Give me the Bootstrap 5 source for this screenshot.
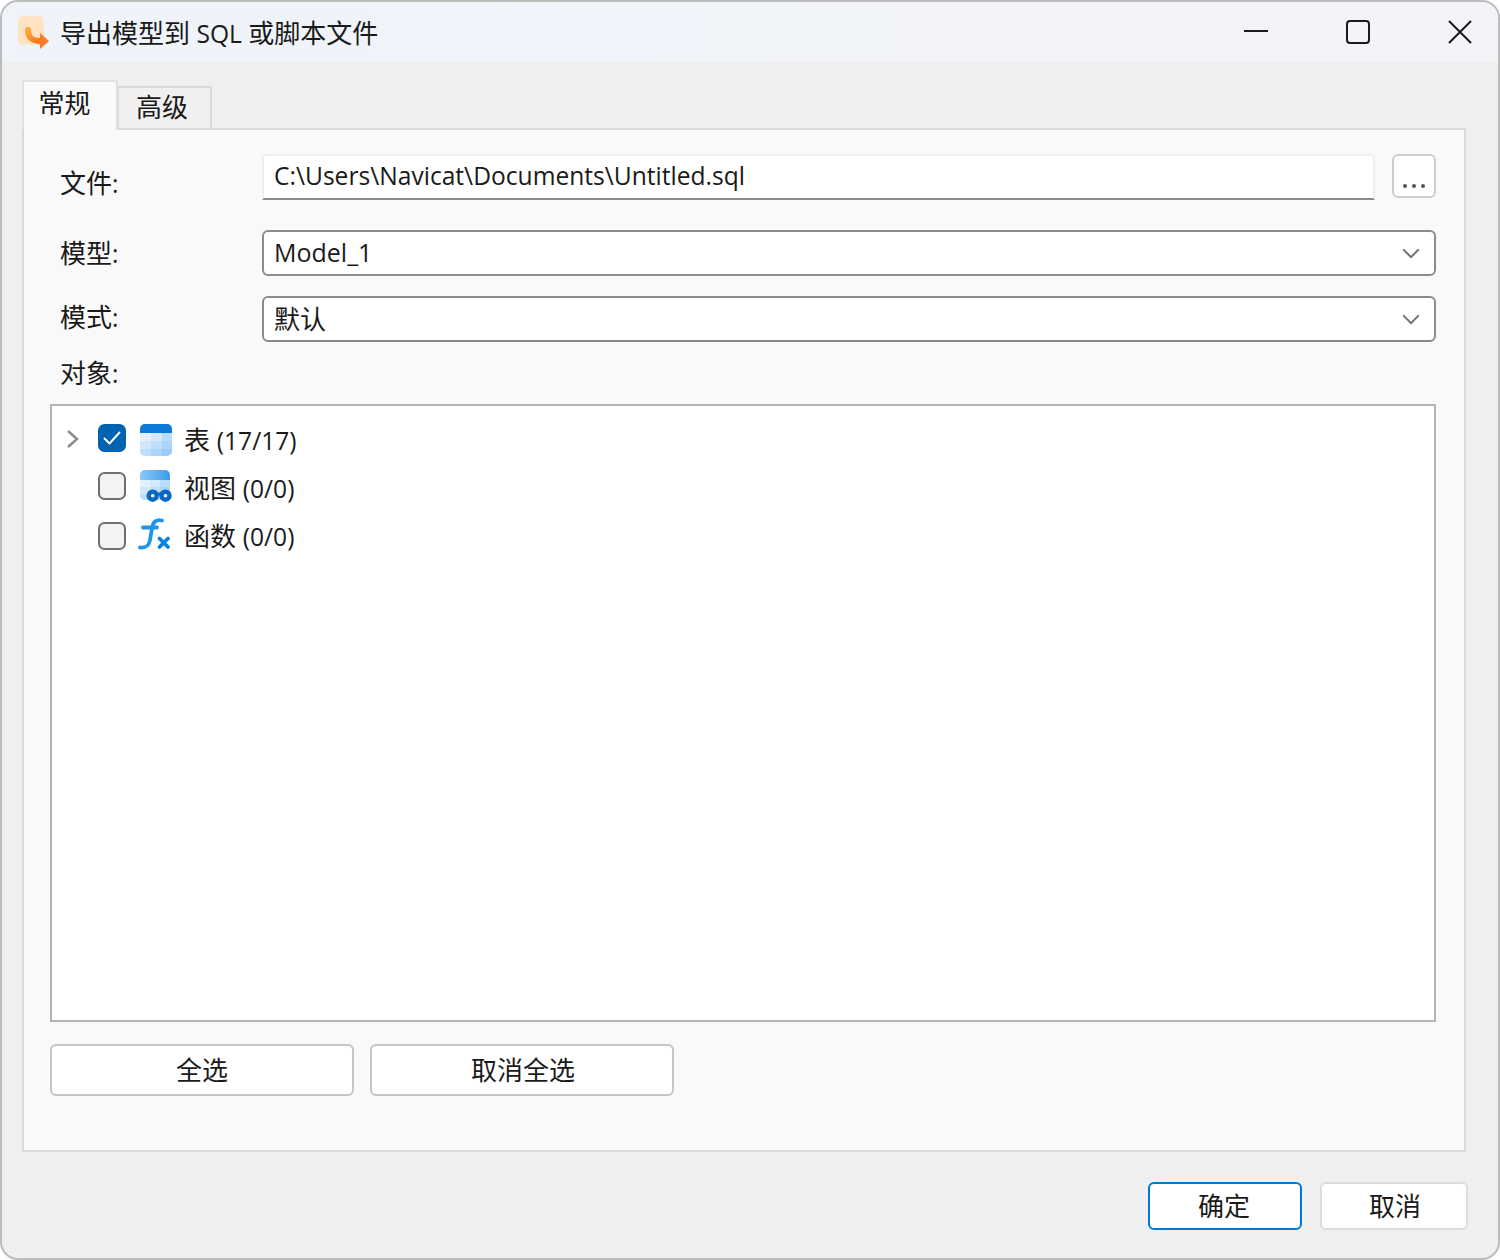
<!DOCTYPE html>
<html lang="zh-CN">
<head>
<meta charset="utf-8">
<title>导出模型到 SQL 或脚本文件</title>
<link href="https://cdn.jsdelivr.net/npm/bootstrap@5.3.0/dist/css/bootstrap.min.css" rel="stylesheet">
<style>
html,body{height:100%;margin:0;background:#fff}
body{font-family:"Open Sans","Noto Sans CJK SC",sans-serif;font-size:26px;color:#1a1a1a;line-height:32px}
.lat{font-size:24.6px}
.win{width:1500px;height:1260px;border:2px solid #bcbcbc;border-radius:18px;background:#efefef;overflow:hidden}
.tbar{height:60px;background:linear-gradient(90deg,#eff4fa,#f3f3f8);padding-left:16px}
.tlogo{width:34px;height:34px;margin-top:2px;margin-right:8px}
.ttl{padding-top:2px}
.wbtn{background:none;border:0;padding:0;width:24px;height:24px;line-height:0}
.wbtn-gap1{margin-right:78px}
.wbtn-gap2{margin-right:78px}
.wbtn-last{margin-right:26px}
.tabstrip{padding:18px 0 0 20px;margin-bottom:-2px;position:relative;z-index:1;border:0;--bs-nav-tabs-border-width:0;align-items:flex-end}
.tabstrip .nav-link{font-size:26px;line-height:32px;color:#1a1a1a;border:2px solid #d9d9d9;border-radius:0;background:#f0f0f0;padding:0 5px 2px 0;height:44px;width:95px;display:flex;align-items:center;justify-content:center;margin:0 0 0 -1px}
.tabstrip .nav-link.active{height:50px;width:96px;background:#f9f9f9;border-bottom:0;color:#1a1a1a;padding:0 11px 6px 0;margin:0;position:relative;z-index:1}
.tabstrip .nav-item{display:flex;align-items:flex-end}
.pane{margin:0 32px 0 20px;height:1024px;background:#f9f9f9;border:2px solid #d9d9d9;padding:24px 28px 0 26px}
.lbl{width:212px;padding-left:10px;flex:none;margin:0}
.lbl-down{padding-top:12px}
.lbl-up{padding-bottom:4px}
.frow1{height:46px}
.inpt{height:46px;width:1113px;flex:none;margin-right:1px;border:2px solid #eee;border-bottom-color:#8a8a8a;border-radius:4px 4px 0 0;background:#fff;font-size:24.6px;line-height:32px;padding:0 10px 4px 10px;color:#1a1a1a;box-shadow:none}
.brow{width:44px;height:44px;margin-left:16px;padding:0;background:#fff;border:2px solid #cdcdcd;border-radius:6px;color:#555;display:flex;justify-content:center;align-items:flex-end}
.brow svg{margin-bottom:7px}
.frow2{height:46px;margin-top:30px}
.frow3{height:46px;margin-top:20px}
.sel{height:46px;width:1174px;flex:none;border:2px solid #8b8b8b;border-radius:6px;font-size:26px;line-height:32px;padding:0 40px 0 10px;color:#1a1a1a;box-shadow:none;--bs-form-select-bg-img:url("data:image/svg+xml,%3csvg xmlns='http://www.w3.org/2000/svg' viewBox='0 0 20 12'%3e%3cpath fill='none' stroke='%23707070' stroke-width='2.2' stroke-linecap='round' d='M2 2l8 8 8-8'/%3e%3c/svg%3e");background-position:right 14px center;background-size:18px 11px}
.sel-lat{font-size:25px;padding-bottom:2px}
.lblobj{padding-left:10px;margin-top:15px;height:32px}
.treebox{margin-top:15px;height:618px;background:#fff;border:2px solid #b4b4b4;padding-top:10px}
.trow{height:48px;padding-left:14px}
.twist{width:18px;flex:none;line-height:0;margin-bottom:2px}
.cbx{width:28px;height:28px;margin:0 14px;flex:none;border:2px solid #6f6f6f;border-radius:6px;--bs-form-check-bg:#f3f3f3;float:none}
.cbx-up{margin-bottom:4px}
.cbx:checked[type=checkbox]{background-color:#0063b1;border-color:#0063b1;background-size:20px 20px;--bs-form-check-bg-image:url("data:image/svg+xml,%3csvg xmlns='http://www.w3.org/2000/svg' viewBox='0 0 20 20'%3e%3cpath fill='none' stroke='%23fff' stroke-width='2' stroke-linecap='round' stroke-linejoin='round' d='M2.5 10.5l5 5 10-11'/%3e%3c/svg%3e")}
.ticon{width:32px;height:32px;flex:none;margin-right:12px;line-height:0}
.ticon svg{overflow:visible}
.ticon-up{margin-bottom:4px}
.ttxt{font-size:26px;line-height:32px}
.actrow{margin-top:22px;gap:16px}
.actbtn{width:304px;height:52px;background:#fff;border:2px solid #c5c5c5;border-radius:6px;font-size:26px;line-height:32px;color:#1a1a1a;padding:0}
.actbtn-nudge{padding-left:2px}
.foot{margin-top:30px;padding-right:30px;gap:18px}
.fbtn{height:48px;background:#fff;border:2px solid #dcdcdc;border-radius:6px;font-size:26px;line-height:32px;color:#1a1a1a;padding:0 0 0 2px;width:148px}
.fbtn-main{width:154px;border-color:#0078d4;padding:0 2px 0 0}
</style>
</head>
<body>
<div class="win d-flex flex-column">
  <div class="tbar d-flex align-items-center">
    <svg class="tlogo" viewBox="0 0 34 34">
      <defs><linearGradient id="arr" x1="0" y1="0" x2="1" y2="1"><stop offset="0" stop-color="#ffa733"/><stop offset="1" stop-color="#ff6f1f"/></linearGradient></defs>
      <rect x="0" y="0" width="26" height="29" rx="5" fill="#ffe3c2"/>
      <path d="M10 14 C10 22 14 25 24 25" fill="none" stroke="url(#arr)" stroke-width="6" stroke-linecap="round"/>
      <path d="M22 17 L31 25 L22 33 Z" fill="#ff7a22"/>
    </svg>
    <span class="flex-grow-1 ttl">导出模型到<span class="lat"> SQL </span>或脚本文件</span>
    <button class="wbtn wbtn-gap1" aria-label="最小化"><svg width="24" height="24" viewBox="0 0 24 24"><path d="M0 11h24" stroke="#1a1a1a" stroke-width="2"/></svg></button>
    <button class="wbtn wbtn-gap2" aria-label="最大化"><svg width="24" height="24" viewBox="0 0 24 24"><rect x="1" y="1" width="22" height="22" rx="3" fill="none" stroke="#1a1a1a" stroke-width="2"/></svg></button>
    <button class="wbtn wbtn-last" aria-label="关闭"><svg width="24" height="24" viewBox="0 0 24 24"><path d="M1 1l22 22M23 1L1 23" stroke="#1a1a1a" stroke-width="2"/></svg></button>
  </div>
  <ul class="nav nav-tabs tabstrip">
    <li class="nav-item"><a class="nav-link active" href="#">常规</a></li>
    <li class="nav-item"><a class="nav-link" href="#">高级</a></li>
  </ul>
  <div class="pane">
    <div class="d-flex align-items-center frow1">
      <label class="lbl lbl-down">文件<span class="lat">:</span></label>
      <input class="form-control inpt" value="C:\Users\Navicat\Documents\Untitled.sql">
      <button class="btn brow align-self-start" aria-label="浏览"><svg width="24" height="6" viewBox="0 0 24 6"><circle cx="3" cy="3" r="2" fill="#555"/><circle cx="12" cy="3" r="2" fill="#555"/><circle cx="21" cy="3" r="2" fill="#555"/></svg></button>
    </div>
    <div class="d-flex align-items-center frow2">
      <label class="lbl">模型<span class="lat">:</span></label>
      <select class="form-select sel sel-lat"><option>Model_1</option></select>
    </div>
    <div class="d-flex align-items-center frow3">
      <label class="lbl lbl-up">模式<span class="lat">:</span></label>
      <select class="form-select sel"><option>默认</option></select>
    </div>
    <div class="lblobj">对象<span class="lat">:</span></div>
    <div class="treebox">
      <div class="d-flex align-items-center trow">
        <span class="twist"><svg width="14" height="20" viewBox="0 0 14 20"><path d="M2 2l9 8-9 8" fill="none" stroke="#8a8a8a" stroke-width="2.4"/></svg></span>
        <input class="form-check-input cbx cbx-up" type="checkbox" checked aria-label="表">
        <span class="ticon"><svg width="32" height="32" viewBox="0 0 32 32">
          <defs><clipPath id="c1"><rect width="32" height="32" rx="5"/></clipPath></defs>
          <g clip-path="url(#c1)">
            <rect width="32" height="9" fill="#0a7bd6"/>
            <rect y="9" width="11" height="8" fill="#e3f1fe"/><rect x="11" y="9" width="11" height="8" fill="#d3e9fd"/><rect x="22" y="9" width="10" height="8" fill="#b9dcfb"/>
            <rect y="17" width="11" height="8" fill="#cfe6fd"/><rect x="11" y="17" width="11" height="8" fill="#bddffb"/><rect x="22" y="17" width="10" height="8" fill="#a9d5fa"/>
            <rect y="25" width="11" height="7" fill="#bddffb"/><rect x="11" y="25" width="11" height="7" fill="#a9d5fa"/><rect x="22" y="25" width="10" height="7" fill="#98ccf9"/>
          </g></svg></span>
        <span class="ttxt">表 <span class="lat">(17/17)</span></span>
      </div>
      <div class="d-flex align-items-center trow">
        <span class="twist"></span>
        <input class="form-check-input cbx cbx-up" type="checkbox" aria-label="视图">
        <span class="ticon ticon-up"><svg width="32" height="36" viewBox="0 0 32 36">
          <defs><clipPath id="c2"><rect width="30" height="30" rx="5"/></clipPath><linearGradient id="g2" x1="0" x2="1"><stop offset="0" stop-color="#8cc8fa"/><stop offset="1" stop-color="#3d9bea"/></linearGradient></defs>
          <g clip-path="url(#c2)">
            <rect width="30" height="10" fill="url(#g2)"/>
            <rect y="10" width="10" height="7" fill="#e3f1fe"/><rect x="10" y="10" width="10" height="7" fill="#d3e9fd"/><rect x="20" y="10" width="10" height="7" fill="#b9dcfb"/>
            <rect y="17" width="10" height="7" fill="#cfe6fd"/><rect x="10" y="17" width="10" height="7" fill="#bddffb"/><rect x="20" y="17" width="10" height="7" fill="#a9d5fa"/>
            <rect y="24" width="30" height="6" fill="#bddffb"/>
          </g>
          <circle cx="12.700" cy="25.700" r="4" fill="#fff" stroke="#0a68c4" stroke-width="4.400"/>
          <circle cx="25.500" cy="25.700" r="4" fill="#fff" stroke="#0a68c4" stroke-width="4.400"/>
          <path d="M16 24h6" stroke="#0a68c4" stroke-width="3"/>
        </svg></span>
        <span class="ttxt">视图 <span class="lat">(0/0)</span></span>
      </div>
      <div class="d-flex align-items-center trow">
        <span class="twist"></span>
        <input class="form-check-input cbx" type="checkbox" aria-label="函数">
        <span class="ticon"><svg width="32" height="32" viewBox="0 0 32 32">
          <path d="M22 0.500C16 -1 13 2 12 8L10 20C9 26 6 28 0 27.500M3 7.500H17" fill="none" stroke="#1e96ef" stroke-width="3.800" stroke-linecap="round"/>
          <path d="M19.500 18.500L28 27M28 18.500L19.500 27" stroke="#0a80e0" stroke-width="3.800" stroke-linecap="round"/>
        </svg></span>
        <span class="ttxt">函数 <span class="lat">(0/0)</span></span>
      </div>
    </div>
    <div class="d-flex actrow">
      <button class="btn actbtn">全选</button>
      <button class="btn actbtn actbtn-nudge">取消全选</button>
    </div>
  </div>
  <div class="d-flex justify-content-end foot">
    <button class="btn fbtn fbtn-main">确定</button>
    <button class="btn fbtn">取消</button>
  </div>
</div>
<script src="https://cdn.jsdelivr.net/npm/bootstrap@5.3.0/dist/js/bootstrap.bundle.min.js"></script>
</body>
</html>
